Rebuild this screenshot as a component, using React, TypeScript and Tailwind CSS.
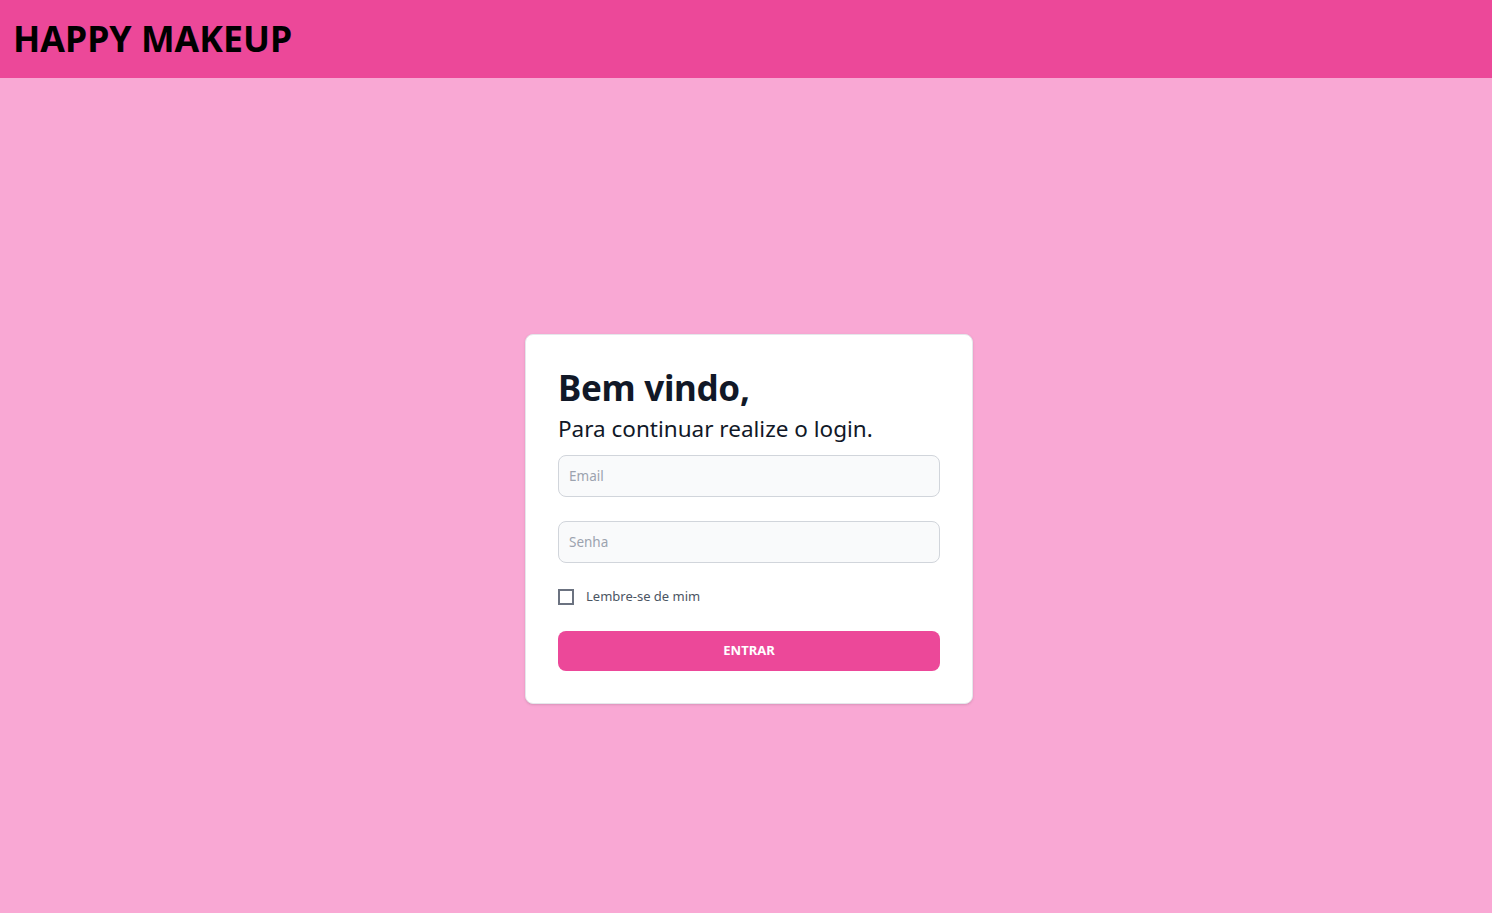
export default function App() {
  return (
    <div className="min-h-screen flex flex-col bg-[#f9a8d4] font-['Noto_Sans',sans-serif]">
      <header className="h-[78px] bg-[#ec4899] flex items-center px-[13px]">
        <h1 className="text-[35.7px] font-bold text-black leading-none">HAPPY MAKEUP</h1>
      </header>
      <main className="flex-1 flex justify-center pt-[256px] pl-[6px]">
        <div className="w-[448px] h-fit bg-white border border-gray-200 rounded-lg shadow p-8">
          <h2 className="text-[35px] font-bold text-[#111827] leading-[40px] tracking-[-0.3px] mt-[1px]">Bem vindo,</h2>
          <p className="text-[22.5px] text-[#111827] leading-[36px] mb-[8px] mt-[3px]">Para continuar realize o login.</p>
          <form className="flex flex-col">
            <input
              type="email"
              placeholder="Email"
              className="h-[42px] w-full bg-[#f9fafb] border border-[#d1d5db] rounded-lg px-[10px] text-[13.5px] text-gray-900 placeholder:text-[#9ca3af] outline-none"
            />
            <input
              type="password"
              placeholder="Senha"
              className="h-[42px] w-full mt-6 bg-[#f9fafb] border border-[#d1d5db] rounded-lg px-[10px] text-[13.5px] text-gray-900 placeholder:text-[#9ca3af] outline-none"
            />
            <label className="flex items-center mt-[26px] h-4">
              <span className="w-4 h-4 border-2 border-[#6b7280] bg-white" />
              <span className="ml-3 text-[13px] text-[#4b5563]">Lembre-se de mim</span>
            </label>
            <button
              type="button"
              className="mt-[26px] h-10 w-full rounded-lg bg-[#ec4899] text-white text-[13px] font-bold"
            >
              ENTRAR
            </button>
          </form>
        </div>
      </main>
    </div>
  );
}
